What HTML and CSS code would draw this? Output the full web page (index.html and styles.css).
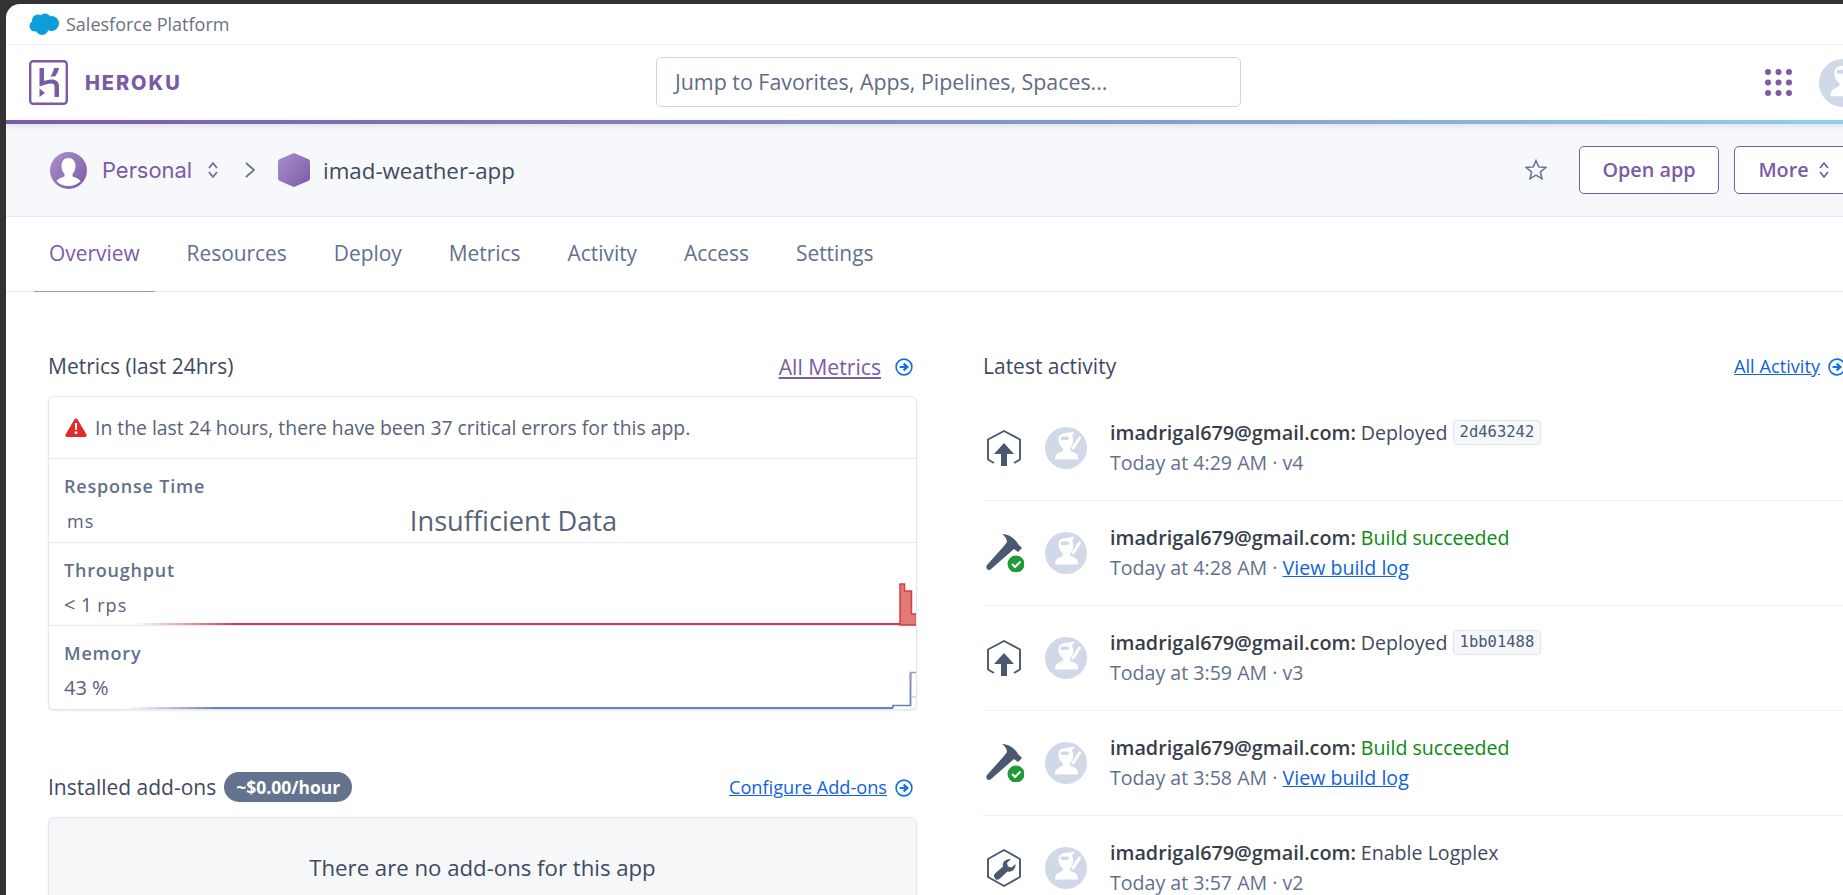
FILE: index.html
```html
<!DOCTYPE html>
<html lang="en">
<head>
    <meta charset="UTF-8">
    <title>imad-weather-app | Heroku</title>
    <link rel="stylesheet" href="styles.css">
</head>
<body>

    <svg class="defs" width="0" height="0">
        <defs>
            <symbol id="ninja" viewBox="0 0 42 42">
                <circle cx="21" cy="21" r="21" fill="#d1d9e9"/>
                <path d="M13.500 13c0-5 3-7 7.500-7l9-1.500-3 4c1 1.500 1.200 3 1.200 5 0 3-1.200 6-3.200 8v2l6 3c1.500 1 2 3 2 6H10c0-3 1-5 2.500-6l5.500-3v-2c-2.500-2-4.500-5-4.500-8.500z" fill="#fff"/>
                <rect x="15.500" y="9.500" width="8.500" height="3.500" rx="1.700" fill="#d1d9e9"/>
                <path d="M34.500 11l-6.500 10" stroke="#fff" stroke-width="3" stroke-linecap="round"/>
            </symbol>
            <symbol id="arrow-circle" viewBox="0 0 18 18">
                <circle cx="9" cy="9" r="7.900" fill="none" stroke="#0f6fe8" stroke-width="1.600"/>
                <path d="M4.600 9h6M8.600 5.600L12.400 9l-3.800 3.400" fill="none" stroke="#0f6fe8" stroke-width="2.200"/>
            </symbol>
            <symbol id="updown" viewBox="0 0 12 18">
                <path d="M2 7l4-5 4 5M2 11l4 5 4-5" fill="none" stroke="currentColor" stroke-width="1.700"/>
            </symbol>
            <symbol id="hex-deploy" viewBox="0 0 36 36">
                <path d="M8 33l-6-3.500V9.500L18 1l16 8.500v20L28 33" fill="none" stroke="#4a5870" stroke-width="1.900" stroke-linejoin="round"/>
                <path d="M18 13l10 11h-7v12h-6V24H8z" fill="#4a5870"/>
            </symbol>
            <symbol id="hex-wrench" viewBox="0 0 36 38">
                <path d="M18 1l16 9v18l-16 9-16-9V10z" fill="none" stroke="#4a5870" stroke-width="1.900" stroke-linejoin="round"/>
                <path d="M9 29c-1.500-1.500-1.500-3 0-4.500l8-7c-1-4 2-8 8-7.500l-4 4 1 3.500 3.500 1 4-3.500c.5 5-3.500 8.500-8 7.500l-7.500 7c-1.500 1.500-3.500 1.500-5 .500z" fill="#4a5870"/>
            </symbol>
            <symbol id="hammer" viewBox="0 0 38 38">
                <path d="M16 0c6 0 13 4 16 10l4 4-4 4-4-3L4.500 35.500c-1.500 1-3.500.5-4-1.500-.5-1.500 0-2.500 1-3.500L18 12l3-4c0-3-2-6-5-8z" fill="#4a5870"/>
                <circle cx="30" cy="30" r="8.500" fill="#1f9a34"/>
                <path d="M26 30l3 3 5.500-5.500" fill="none" stroke="#fff" stroke-width="2"/>
            </symbol>
        </defs>
    </svg>

    <div class="app">

        <!-- Salesforce strip -->
        <div class="platform-bar">
            <svg class="cloud" width="30" height="22" viewBox="0 0 30 22">
                <g fill="#0d9dda">
                    <circle cx="9" cy="7.500" r="6"/>
                    <circle cx="16" cy="6.500" r="6"/>
                    <circle cx="22.500" cy="10.500" r="7.500"/>
                    <circle cx="13" cy="15.500" r="6.500"/>
                    <circle cx="6" cy="13" r="5.500"/>
                </g>
            </svg>
            <span>Salesforce Platform</span>
        </div>

        <!-- Main nav -->
        <div class="nav-bar">
            <div class="brand">
                <svg width="39" height="45" viewBox="0 0 39 45">
                    <rect x="1.200" y="1.200" width="36.600" height="42.600" rx="3" fill="none" stroke="#7b5ba5" stroke-width="2.400"/>
                    <path d="M10.500 8H15V21c3-1 6-1.500 8-1.500 4 0 7 2.500 7 6.500V37H25.500V26.500c0-2-1-3-3-3-3 0-8.500 1.500-12 3z" fill="#7b5ba5"/>
                    <path d="M25 8h5c-.5 3-2 6-4 8.500h-4.500C23 14 24.500 11 25 8z" fill="#7b5ba5"/>
                    <path d="M10.500 37v-8.500l5.500 4.500z" fill="#7b5ba5"/>
                </svg>
                <span class="brand-name">HEROKU</span>
            </div>
            <div class="search">Jump to Favorites, Apps, Pipelines, Spaces...</div>
            <div class="nav-right">
                <svg width="27" height="27" viewBox="0 0 27 27" fill="#7b5ba5">
                    <circle cx="3" cy="3" r="3"/><circle cx="13.500" cy="3" r="3"/><circle cx="24" cy="3" r="3"/>
                    <circle cx="3" cy="13.500" r="3"/><circle cx="13.500" cy="13.500" r="3"/><circle cx="24" cy="13.500" r="3"/>
                    <circle cx="3" cy="24" r="3"/><circle cx="13.500" cy="24" r="3"/><circle cx="24" cy="24" r="3"/>
                </svg>
                <svg class="nav-avatar" width="48" height="48"><use href="#ninja"/></svg>
            </div>
        </div>
        <div class="rainbow"></div>

        <!-- App header -->
        <div class="app-header">
            <svg width="37" height="37" viewBox="0 0 37 37">
                <defs>
                    <linearGradient id="purple" x1="0" y1="0" x2="1" y2="1">
                        <stop offset="0" stop-color="#ab8fcb"/>
                        <stop offset="1" stop-color="#7b5ba5"/>
                    </linearGradient>
                </defs>
                <circle cx="18.500" cy="18.500" r="18.500" fill="url(#purple)"/>
                <path d="M18.500 6c-4.500 0-7 3.500-7 8 0 3 1 6 3 8v2.500c-3 1-6.500 2-8 4.500 3 3.500 7 5 12 5s9-1.500 12-5c-1.500-2.500-5-3.500-8-4.500V22c2-2 3-5 3-8 0-4.500-2.500-8-7-8z" fill="#fff"/>
            </svg>
            <span class="team-name">Personal</span>
            <svg class="team-switch" width="12" height="18"><use href="#updown"/></svg>
            <svg class="crumb-sep" width="10" height="16" viewBox="0 0 10 16">
                <path d="M1 1l8 7-8 7" fill="none" stroke="#62718c" stroke-width="1.700"/>
            </svg>
            <svg class="app-hex" width="32" height="34" viewBox="0 0 32 34">
                <path d="M16 0l14 6c1.500.8 2 1.500 2 3v16c0 1.500-.5 2.200-2 3l-14 6-14-6c-1.500-.8-2-1.500-2-3V9c0-1.500.5-2.200 2-3z" fill="url(#purple)"/>
            </svg>
            <span class="app-name">imad-weather-app</span>

            <div class="header-actions">
                <svg class="star" width="22" height="22" viewBox="0 0 22 22">
                    <path d="M11 1.500l2.700 6.400 7 .6-5.300 4.500 1.600 6.800-6-3.600-6 3.600 1.600-6.800L1.300 8.500l7-.6z" fill="none" stroke="#62718c" stroke-width="1.500"/>
                </svg>
                <button class="btn btn-open">Open app</button>
                <button class="btn btn-more">More <svg width="12" height="18"><use href="#updown"/></svg></button>
            </div>
        </div>

        <!-- Tabs -->
        <div class="tabs">
            <a class="tab active">Overview</a>
            <a class="tab">Resources</a>
            <a class="tab">Deploy</a>
            <a class="tab">Metrics</a>
            <a class="tab">Activity</a>
            <a class="tab">Access</a>
            <a class="tab">Settings</a>
        </div>

        <div class="main">

            <div class="col">
                <div class="section-head">
                    <h2>Metrics (last 24hrs)</h2>
                    <a class="link-all link-purple">All Metrics</a>
                    <svg class="go go-wide" width="18" height="18"><use href="#arrow-circle"/></svg>
                </div>

                <div class="panel">
                    <div class="alert">
                        <svg width="22" height="19" viewBox="0 0 22 19">
                            <path d="M11 .500c.8 0 1.300.4 1.800 1.200l8.500 14.500c.8 1.500 0 2.800-1.500 2.800H2.200C.7 19-.1 17.700.7 16.200L9.200 1.700C9.700.9 10.200.500 11 .500z" fill="#e02b2b"/>
                            <path d="M9.800 5h2.400l-.4 7h-1.600zM9.700 13.500h2.600V16H9.700z" fill="#fff"/>
                        </svg>
                        <span>In the last 24 hours, there have been 37 critical errors for this app.</span>
                    </div>

                    <div class="metric metric-first">
                        <div class="metric-label">Response Time</div>
                        <div class="metric-value indent"><small>ms</small></div>
                        <div class="no-data">Insufficient Data</div>
                    </div>

                    <div class="metric">
                        <div class="metric-label">Throughput</div>
                        <div class="metric-value">&lt; 1 <small>rps</small></div>
                        <svg class="chart" width="867" height="83" viewBox="0 0 867 83">
                            <defs>
                                <linearGradient id="fade-red" x1="0" y1="0" x2="1" y2="0">
                                    <stop offset="0.100" stop-color="#d33f3f" stop-opacity="0"/>
                                    <stop offset="0.220" stop-color="#d33f3f"/>
                                </linearGradient>
                            </defs>
                            <rect x="0" y="80" width="851" height="2" fill="url(#fade-red)"/>
                            <path d="M851 82V41h4.500v7h7v23h5v11z" fill="#e27a7a" stroke="#d33f3f" stroke-width="1.500"/>
                        </svg>
                    </div>

                    <div class="metric metric-last">
                        <div class="metric-label">Memory</div>
                        <div class="metric-value">43 <small>%</small></div>
                        <svg class="chart" width="867" height="83" viewBox="0 0 867 83">
                            <defs>
                                <linearGradient id="fade-blue" x1="0" y1="0" x2="1" y2="0">
                                    <stop offset="0.090" stop-color="#6f7cbe" stop-opacity="0"/>
                                    <stop offset="0.200" stop-color="#6f7cbe"/>
                                </linearGradient>
                            </defs>
                            <rect x="0" y="81" width="844" height="2" fill="url(#fade-blue)"/>
                            <path d="M844 82v-2.500h17.500V47" fill="none" stroke="#6f7cbe" stroke-width="1.700"/>
                            <path d="M861.500 56V46.500H867" fill="none" stroke="#a592c4" stroke-width="1.700"/>
                            <path d="M862 71h5" stroke="#8fd0e8" stroke-width="1"/>
                        </svg>
                    </div>
                </div>

                <div class="section-head addons-head">
                    <h2>Installed add-ons</h2>
                    <span class="cost-badge">~$0.00/hour</span>
                    <a class="link-all">Configure Add-ons</a>
                    <svg class="go" width="18" height="18"><use href="#arrow-circle"/></svg>
                </div>

                <div class="panel empty-panel">There are no add-ons for this app</div>
            </div>

            <div class="col">
                <div class="section-head activity-head">
                    <h2>Latest activity</h2>
                    <a class="link-all">All Activity</a>
                    <svg class="go" width="18" height="18"><use href="#arrow-circle"/></svg>
                </div>

                <div class="activity">
                    <svg class="activity-icon" width="36" height="36"><use href="#hex-deploy"/></svg>
                    <svg class="activity-avatar" width="42" height="42"><use href="#ninja"/></svg>
                    <div class="activity-text">
                        <div class="activity-title"><b>imadrigal679@gmail.com:</b> Deployed <code>2d463242</code></div>
                        <div class="activity-sub">Today at 4:29 AM · v4</div>
                    </div>
                </div>

                <div class="activity">
                    <svg class="activity-icon" width="38" height="38"><use href="#hammer"/></svg>
                    <svg class="activity-avatar" width="42" height="42"><use href="#ninja"/></svg>
                    <div class="activity-text">
                        <div class="activity-title"><b>imadrigal679@gmail.com:</b> <span class="ok">Build succeeded</span></div>
                        <div class="activity-sub">Today at 4:28 AM · <a>View build log</a></div>
                    </div>
                </div>

                <div class="activity">
                    <svg class="activity-icon" width="36" height="36"><use href="#hex-deploy"/></svg>
                    <svg class="activity-avatar" width="42" height="42"><use href="#ninja"/></svg>
                    <div class="activity-text">
                        <div class="activity-title"><b>imadrigal679@gmail.com:</b> Deployed <code>1bb01488</code></div>
                        <div class="activity-sub">Today at 3:59 AM · v3</div>
                    </div>
                </div>

                <div class="activity">
                    <svg class="activity-icon" width="38" height="38"><use href="#hammer"/></svg>
                    <svg class="activity-avatar" width="42" height="42"><use href="#ninja"/></svg>
                    <div class="activity-text">
                        <div class="activity-title"><b>imadrigal679@gmail.com:</b> <span class="ok">Build succeeded</span></div>
                        <div class="activity-sub">Today at 3:58 AM · <a>View build log</a></div>
                    </div>
                </div>

                <div class="activity">
                    <svg class="activity-icon" width="36" height="38"><use href="#hex-wrench"/></svg>
                    <svg class="activity-avatar" width="42" height="42"><use href="#ninja"/></svg>
                    <div class="activity-text">
                        <div class="activity-title"><b>imadrigal679@gmail.com:</b> Enable Logplex</div>
                        <div class="activity-sub">Today at 3:57 AM · v2</div>
                    </div>
                </div>
            </div>

        </div>
    </div>

</body>
</html>
```

FILE: styles.css
```css
html, body {
    height: 100%;
    margin: 0;
    overflow: hidden;
}

body {
    background: #333;
    padding: 4px 0 0 6px;
    box-sizing: border-box;
    font-family: "Open Sans", "Noto Sans", sans-serif;
    color: #3f4a5f;
}

.defs {
    position: absolute;
}

.app {
    width: 1890px;
    height: 891px;
    background: #fff;
    border-top-left-radius: 14px;
    overflow: hidden;
}

/* top strip */
.platform-bar {
    height: 40px;
    border-bottom: 1px solid #eef0f5;
    display: flex;
    align-items: center;
    padding-left: 23px;
    font-size: 18px;
    color: #6b7280;
}

.cloud {
    margin-right: 7px;
}

/* nav */
.nav-bar {
    height: 75px;
    display: flex;
    align-items: center;
    padding: 0 29px 0 23px;
}

.brand {
    width: 627px;
    display: flex;
    align-items: center;
    gap: 17px;
}

.brand-name {
    font-family: "Inter", sans-serif;
    font-weight: 800;
    font-size: 20px;
    letter-spacing: 1.900px;
    color: #7b5ba5;
}

.search {
    width: 585px;
    height: 50px;
    margin-top: -1px;
    box-sizing: border-box;
    border: 1px solid #ced6e6;
    border-radius: 5px;
    padding-left: 18px;
    line-height: 47px;
    font-size: 21.400px;
    color: #5f6c84;
}

.nav-right {
    margin-left: auto;
    display: flex;
    align-items: center;
    gap: 27px;
}

.rainbow {
    height: 4px;
    background: linear-gradient(to right, #7b5ba5 0%, #87a3d0 66%, #8fd0e8 98%);
    box-shadow: 0 2px 5px rgba(60, 70, 100, 0.15);
    position: relative;
}

/* app header */
.app-header {
    height: 92px;
    background: #f7f8fb;
    border-bottom: 1px solid #e7e9f2;
    display: flex;
    align-items: center;
    padding: 0 42px 0 44px;
}

.team-name {
    font-family: "Inter", sans-serif;
    font-size: 21.900px;
    color: #7b5ba5;
    margin-left: 15px;
}

.team-switch {
    color: #7b5ba5;
    margin-left: 15px;
}

.crumb-sep {
    margin-left: 26px;
}

.app-hex {
    margin-left: 23px;
}

.app-name {
    font-size: 22.300px;
    color: #3f4a5f;
    margin-left: 13px;
}

.header-actions {
    margin-left: auto;
    display: flex;
    align-items: center;
}

.star {
    margin-right: 32px;
}

.btn {
    height: 48px;
    background: #fff;
    border: 1px solid #7b5ba5;
    border-radius: 5px;
    color: #7b5ba5;
    font-family: "Open Sans", sans-serif;
    font-weight: 600;
    font-size: 19.800px;
    line-height: 24px;
    padding: 0 0 1px;
    display: flex;
    align-items: center;
    justify-content: center;
}

.btn-open {
    width: 140px;
}

.btn-more {
    width: 120px;
    margin-left: 15px;
    gap: 9px;
}

/* tabs */
.tabs {
    height: 74px;
    border-bottom: 1px solid #e7e9f2;
    display: flex;
    padding-left: 28px;
}

.tab {
    padding: 0 15px;
    margin-right: 17px;
    line-height: 72px;
    height: 75px;
    box-sizing: border-box;
    font-size: 20.900px;
    color: #62718c;
}

.tab.active {
    color: #7b5ba5;
    border-bottom: 1px solid #a592c4;
}

/* main columns */
.main {
    display: grid;
    grid-template-columns: 869px 867px;
    column-gap: 66px;
    padding: 60px 0 0 43px;
    margin-left: -1px;
}

.section-head {
    display: flex;
    align-items: center;
    height: 28px;
    margin-bottom: 16px;
}

.section-head h2 {
    margin: 0;
    font-weight: 400;
    font-size: 21px;
    color: #3f4a5f;
}

.link-all {
    margin-left: auto;
    font-size: 18.200px;
    color: #0f62e0;
    text-decoration: underline;
}

.link-purple {
    font-size: 21.200px;
    color: #7b5ba5;
}

.go {
    margin: 2px 4px 0 8px;
}

.go-wide {
    margin-left: 14px;
}

.panel {
    border: 1px solid #e4e7ef;
    border-radius: 6px;
    box-shadow: 0 1px 2px rgba(60, 70, 100, 0.12);
    background: #fff;
}

.alert {
    height: 61px;
    border-bottom: 1px solid #e7e9f2;
    display: flex;
    align-items: center;
    gap: 8px;
    padding-left: 16px;
    font-size: 19.350px;
    color: #566379;
}

.metric {
    height: 83px;
    box-sizing: border-box;
    border-bottom: 1px solid #e7e9f2;
    padding: 15px 0 0 15px;
    position: relative;
}

.metric-first {
    height: 84px;
}

.metric-last {
    border-bottom: 0;
}

.metric-label {
    font-weight: 600;
    font-size: 18px;
    letter-spacing: 0.800px;
    line-height: 24px;
    color: #62718c;
}

.metric-value {
    margin-top: 11px;
    font-size: 20px;
    line-height: 24px;
    color: #566379;
}

.metric-value small {
    font-size: 18px;
    letter-spacing: 1px;
}

.metric-last small {
    font-size: 20px;
}

.indent {
    padding-left: 3px;
}

.no-data {
    position: absolute;
    left: 0;
    right: 0;
    bottom: 3px;
    padding-left: 62px;
    text-align: center;
    font-size: 27.200px;
    line-height: 36px;
    color: #566379;
}

.chart {
    position: absolute;
    left: 0;
    top: 0;
    pointer-events: none;
}

.addons-head {
    height: 30px;
    margin: 62px 0 15px;
}

.cost-badge {
    margin-left: 8px;
    padding: 0 12px;
    height: 30px;
    line-height: 30px;
    border-radius: 15px;
    background: #63738d;
    color: #fff;
    font-weight: 700;
    font-size: 17.500px;
}

.empty-panel {
    background: #f6f7f9;
    height: 200px;
    box-sizing: border-box;
    padding-top: 30px;
    text-align: center;
    font-size: 22.200px;
    line-height: 40px;
    color: #3f4a5f;
}

/* activity list */
.activity {
    height: 105px;
    box-sizing: border-box;
    border-bottom: 1px solid #eef0f6;
    display: flex;
    align-items: center;
    padding-left: 3px;
}

.activity-icon {
    flex: none;
}

.activity-avatar {
    flex: none;
    margin-left: 23px;
    margin-right: 23px;
}

.activity-icon[width="38"] {
    margin-right: -2px;
}

.activity-text {
    margin-top: -1px;
}

.activity-title {
    font-size: 19.600px;
    line-height: 30px;
    color: #3f4a5f;
    display: flex;
    align-items: center;
    gap: 5px;
}

.activity-title b {
    font-weight: 600;
    font-size: 19.800px;
    color: #383d4a;
}

.activity-sub {
    font-size: 19.600px;
    line-height: 30px;
    color: #62718c;
}

.activity-sub a {
    color: #0f62e0;
    text-decoration: underline;
}

.ok {
    color: #0a8a10;
}

code {
    font-family: "DejaVu Sans Mono", monospace;
    font-size: 15.500px;
    line-height: 23px;
    padding: 0 6px;
    background: #f6f7fb;
    border: 1px solid #e1e5ee;
    border-radius: 4px;
    color: #4a5870;
}
```
